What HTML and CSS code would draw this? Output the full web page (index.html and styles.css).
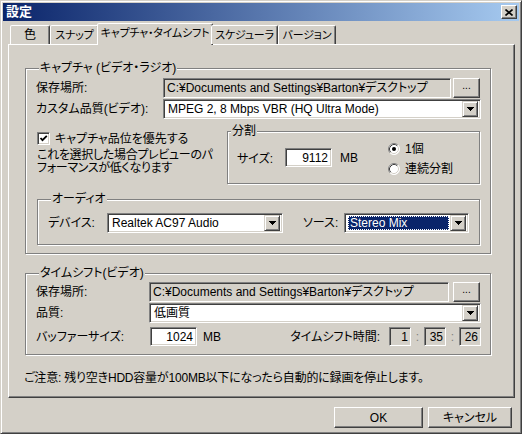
FILE: index.html
```html
<!DOCTYPE html>
<html lang="ja">
<head>
<meta charset="utf-8">
<title>設定</title>
<link rel="stylesheet" href="styles.css">
</head>
<body>
<div class="window">
  <div class="titlebar">
    <span class="title">設定</span>
    <span class="close"><svg width="8" height="7" viewBox="0 0 8 7"><path d="M0.5 0.5L7.5 6.5M7.5 0.5L0.5 6.5" stroke="#000" stroke-width="1.6"/></svg></span>
  </div>
  <div class="client">
    <div class="tabs">
      <div class="tab t1">色</div>
      <div class="tab t2">スナップ</div>
      <div class="tab t3 sel">キャプチャ・タイムシフト</div>
      <div class="tab t4">スケジューラ</div>
      <div class="tab t5">バージョン</div>
    </div>
    <div class="panel">
      <div class="group cap">
        <div class="gtitle">キャプチャ (ビデオ・ラジオ)</div>
        <div class="row r1">
          <span class="lbl clbl">保存場所:</span>
          <div class="field ro path">C:¥Documents and Settings¥Barton¥デスクトップ</div>
          <div class="btn browse">...</div>
        </div>
        <div class="row r2">
          <span class="lbl clbl">カスタム品質(ビデオ):</span>
          <div class="combo grow">
            <span class="ctext">MPEG 2, 8 Mbps VBR (HQ Ultra Mode)</span>
            <span class="dd"><svg width="7" height="4" viewBox="0 0 7 4" shape-rendering="crispEdges"><path d="M0 0h7v1H0zM1 1h5v1H1zM2 2h3v1H2zM3 3h1v1H3z"/></svg></span>
          </div>
        </div>
        <div class="mid">
          <div class="midleft">
            <div class="check">
              <span class="cbox"><svg width="9" height="9" viewBox="0 0 9 9"><path d="M1.5 4L3.5 6.2L7.8 1.8" fill="none" stroke="#000" stroke-width="1.8"/></svg></span>
              <span>キャプチャ品位を優先する</span>
            </div>
            <p class="desc">これを選択した場合プレビューのパ<br>フォーマンスが低くなります</p>
          </div>
          <div class="group split">
            <div class="gtitle">分割</div>
            <div class="split-body">
              <span class="slbl">サイズ:</span>
              <div class="field num">9112</div>
              <span class="unit">MB</span>
              <div class="radios">
                <div class="radio">
                  <svg width="12" height="12" viewBox="0 0 12 12"><circle cx="6" cy="6" r="5.5" fill="#fff"/><path d="M2.11 9.89A5.5 5.5 0 0 1 9.89 2.11" fill="none" stroke="#808080"/><path d="M2.11 9.89A5.5 5.5 0 0 0 9.89 2.11" fill="none" stroke="#fff"/><path d="M2.82 9.18A4.5 4.5 0 0 1 9.18 2.82" fill="none" stroke="#404040"/><path d="M2.82 9.18A4.5 4.5 0 0 0 9.18 2.82" fill="none" stroke="#D4D0C8"/><circle cx="6" cy="6" r="2" fill="#000"/></svg>
                  <span>1個</span>
                </div>
                <div class="radio">
                  <svg width="12" height="12" viewBox="0 0 12 12"><circle cx="6" cy="6" r="5.5" fill="#fff"/><path d="M2.11 9.89A5.5 5.5 0 0 1 9.89 2.11" fill="none" stroke="#808080"/><path d="M2.11 9.89A5.5 5.5 0 0 0 9.89 2.11" fill="none" stroke="#fff"/><path d="M2.82 9.18A4.5 4.5 0 0 1 9.18 2.82" fill="none" stroke="#404040"/><path d="M2.82 9.18A4.5 4.5 0 0 0 9.18 2.82" fill="none" stroke="#D4D0C8"/></svg>
                  <span>連続分割</span>
                </div>
              </div>
            </div>
          </div>
        </div>
        <div class="group audio">
          <div class="gtitle">オーディオ</div>
          <div class="row ar">
            <span class="lbl dev">デバイス:</span>
            <div class="combo devc">
              <span class="ctext">Realtek AC97 Audio</span>
              <span class="dd"><svg width="7" height="4" viewBox="0 0 7 4" shape-rendering="crispEdges"><path d="M0 0h7v1H0zM1 1h5v1H1zM2 2h3v1H2zM3 3h1v1H3z"/></svg></span>
            </div>
            <span class="lbl src">ソース:</span>
            <div class="combo srcc">
              <span class="ctext hl"><span class="hltext">Stereo Mix</span></span>
              <span class="dd"><svg width="7" height="4" viewBox="0 0 7 4" shape-rendering="crispEdges"><path d="M0 0h7v1H0zM1 1h5v1H1zM2 2h3v1H2zM3 3h1v1H3z"/></svg></span>
            </div>
          </div>
        </div>
      </div>

      <div class="group ts">
        <div class="gtitle">タイムシフト(ビデオ)</div>
        <div class="row t-r1">
          <span class="lbl tslbl">保存場所:</span>
          <div class="field ro tpath">C:¥Documents and Settings¥Barton¥デスクトップ</div>
          <div class="btn browse tb">...</div>
        </div>
        <div class="row t-r2">
          <span class="lbl tslbl">品質:</span>
          <div class="combo grow">
            <span class="ctext">低画質</span>
            <span class="dd"><svg width="7" height="4" viewBox="0 0 7 4" shape-rendering="crispEdges"><path d="M0 0h7v1H0zM1 1h5v1H1zM2 2h3v1H2zM3 3h1v1H3z"/></svg></span>
          </div>
        </div>
        <div class="row t-r3">
          <span class="lbl tslbl">バッファーサイズ:</span>
          <div class="field num buf">1024</div>
          <span class="unit2">MB</span>
          <div class="timeshift">
            <span class="tlbl">タイムシフト時間:</span>
            <div class="field ro num tf">1</div>
            <span class="sep">:</span>
            <div class="field ro num tf">35</div>
            <span class="sep">:</span>
            <div class="field ro num tf">26</div>
          </div>
        </div>
      </div>

      <p class="note">ご注意: 残り空きHDD容量が100MB以下になったら自動的に録画を停止します。</p>
    </div>
    <div class="buttons">
      <div class="btn ok">OK</div>
      <div class="btn cancel">キャンセル</div>
    </div>
  </div>
</div>
</body>
</html>
```
FILE: styles.css
```css
* { box-sizing: border-box; }
html, body { margin: 0; padding: 0; }
body {
  background: #D4D0C8;
  font-family: "Liberation Sans", "Noto Sans CJK JP", sans-serif;
  font-size: 12px;
  line-height: 14px;
  color: #000;
  font-feature-settings: "palt";
}
p { margin: 0; }

.window {
  width: 522px;
  height: 434px;
  border: 1px solid;
  border-color: #D4D0C8 #404040 #404040 #D4D0C8;
  box-shadow: inset 1px 1px #fff, inset -1px -1px #808080;
  padding: 2px;
}

.titlebar {
  height: 18px;
  display: flex;
  align-items: center;
  justify-content: space-between;
  padding: 0 2px 0 3px;
  background: linear-gradient(to right, #0A246A, #A6CAF0);
}
.title { color: #fff; font-weight: bold; font-size: 13px; }
.close {
  width: 16px;
  height: 14px;
  background: #D4D0C8;
  border: 1px solid;
  border-color: #fff #404040 #404040 #fff;
  box-shadow: inset -1px -1px #808080;
  display: flex;
  align-items: center;
  justify-content: center;
}

.client { padding: 2px 0 0 5px; }

.tabs {
  display: flex;
  align-items: flex-end;
  height: 21px;
  padding-left: 2px;
  position: relative;
  z-index: 1;
}
.tab {
  height: 19px;
  border: 1px solid;
  border-bottom: none;
  border-color: #fff #404040 transparent #fff;
  box-shadow: inset -1px 0 #808080;
  border-radius: 2px 2px 0 0;
  text-align: center;
  padding-top: 2px;
  background: #D4D0C8;
  white-space: nowrap;
  font-size: 11px;
  letter-spacing: -0.2px;
}
.t1 { width: 40px; font-size: 12px; }
.t2 { width: 49px; }
.t3 { width: 116px; }
.t4 { width: 67px; }
.t5 { width: 58px; }
.tab.sel {
  height: 22px;
  margin: 0 -2px -1px;
  padding-top: 2px;
}

.panel {
  width: 507px;
  height: 354px;
  border: 1px solid;
  border-color: #fff #404040 #404040 #fff;
  box-shadow: inset -1px -1px #808080;
  padding: 23px 0 0 16px;
}

.group {
  border: 1px solid #808080;
  box-shadow: inset 1px 1px #fff, 1px 1px #fff;
}
.gtitle {
  width: max-content;
  margin: -8px 0 0 3px;
  padding: 0 1px;
  background: #D4D0C8;
  line-height: 14px;
}

.row { display: flex; align-items: center; }
.lbl { flex: none; white-space: nowrap; }

.field {
  height: 20px;
  border: 1px solid;
  border-color: #808080 #fff #fff #808080;
  box-shadow: inset 1px 1px #404040, inset -1px -1px #D4D0C8;
  background: #fff;
  display: flex;
  align-items: center;
  padding: 0 3px;
  white-space: nowrap;
  overflow: hidden;
}
.field.ro { background: #D4D0C8; }
.field.num { justify-content: flex-end; }

.btn {
  border: 1px solid;
  border-color: #fff #404040 #404040 #fff;
  box-shadow: inset -1px -1px #808080;
  background: #D4D0C8;
  display: flex;
  align-items: center;
  justify-content: center;
}
.browse { width: 27px; height: 20px; margin-left: 2px; font-size: 10px; padding-bottom: 4px; flex: none; }

.combo {
  height: 20px;
  border: 1px solid;
  border-color: #808080 #fff #fff #808080;
  box-shadow: inset 1px 1px #404040, inset -1px -1px #D4D0C8;
  background: #fff;
  display: flex;
  align-items: center;
  padding: 2px;
  flex: none;
}
.combo.grow { flex: 1; }
.ctext { flex: 1; padding-left: 2px; white-space: nowrap; overflow: hidden; }
.dd {
  width: 16px;
  height: 16px;
  flex: none;
  border: 1px solid;
  border-color: #D4D0C8 #404040 #404040 #D4D0C8;
  box-shadow: inset 1px 1px #fff, inset -1px -1px #808080;
  background: #D4D0C8;
  display: flex;
  align-items: center;
  justify-content: center;
}

/* capture group */
.cap {
  width: 466px;
  padding: 0 9px 8px 10px;
}
.cap .r1 { margin-top: 3px; }
.clbl { width: 127px; }
.path { width: 288px; flex: none; }
.cap .r2 { margin-top: 1px; }

.mid { display: flex; }
.midleft { width: 191px; padding-left: 1px; }
.check {
  display: flex;
  align-items: center;
  gap: 5px;
  margin-top: 13px;
  height: 13px;
}
.cbox {
  width: 13px;
  height: 13px;
  border: 1px solid;
  border-color: #808080 #fff #fff #808080;
  box-shadow: inset 1px 1px #404040, inset -1px -1px #D4D0C8;
  background: #fff;
  display: flex;
  align-items: center;
  justify-content: center;
}
.desc { margin-top: 4px; line-height: 13px; letter-spacing: -0.3px; }

.split {
  width: 253px;
  height: 53px;
  margin-top: 12px;
}
.split-body {
  display: flex;
  align-items: center;
  padding-left: 9px;
  margin-top: 1px;
  height: 40px;
}
.slbl { width: 48px; }
.num { width: 47px; height: 19px; flex: none; }
.split .num { margin-bottom: 3px; }
.unit { width: 56px; padding-left: 8px; margin-bottom: 3px; }
.radio { display: flex; align-items: center; gap: 5px; height: 20px; }
.radio svg { flex: none; }

.audio {
  width: 443px;
  margin: 15px 0 0 1px;
  padding: 0 9px 11px 10px;
}
.audio .ar { margin-top: 7px; }
.dev { width: 59px; }
.devc { width: 176px; }
.src { width: 41px; margin-left: 20px; }
.srcc { width: 125px; }
.hl { padding: 1px; }
.hltext {
  display: block;
  background: #0A246A;
  color: #fff;
  outline: 1px dotted #fff;
  outline-offset: -1px;
  padding: 0 2px;
  line-height: 14px;
}

/* timeshift group */
.ts {
  width: 466px;
  margin-top: 19px;
  padding: 0 9px 8px 10px;
}
.tslbl { width: 113px; }
.t-r1 { margin-top: 2px; }
.tpath { width: 300px; flex: none; }
.tb { margin-left: 4px; }
.t-r2 { margin-top: 1px; }
.t-r3 { margin-top: 4px; }
.buf { margin-left: 1px; }
.unit2 { margin-left: 6px; }
.timeshift { margin-left: auto; display: flex; align-items: center; }
.tlbl { margin-right: 9px; }
.tf { width: 22px; height: 19px; padding: 0 2px; }
.sep { width: 13px; text-align: center; color: #808080; }

.note { margin: 16px 0 0 -1px; letter-spacing: -0.2px; }

.buttons {
  display: flex;
  justify-content: flex-end;
  gap: 5px;
  margin-top: 9px;
  padding-right: 7px;
}
.ok { width: 89px; height: 21px; }
.cancel { width: 84px; height: 21px; }
```
